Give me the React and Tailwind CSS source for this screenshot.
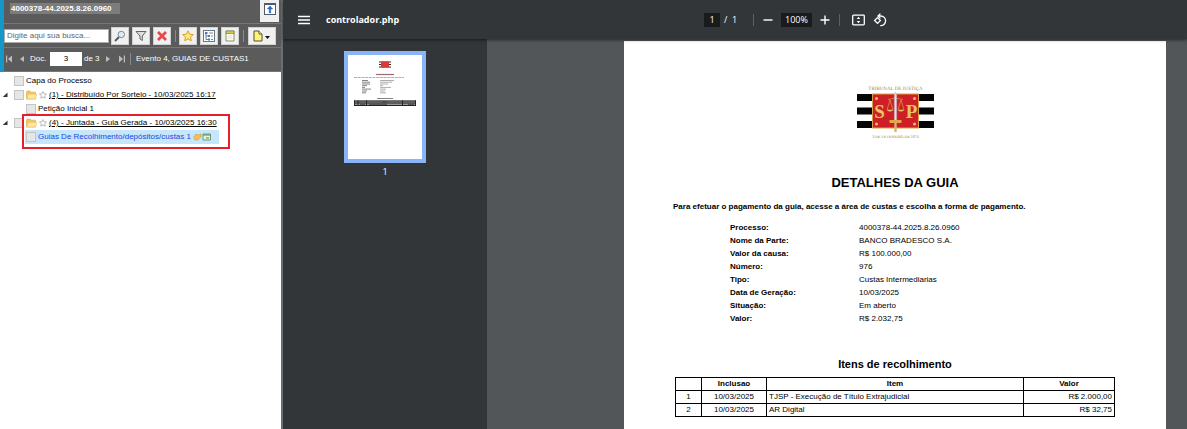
import React from "react";

const details = [
  ["Processo:", "4000378-44.2025.8.26.0960"],
  ["Nome da Parte:", "BANCO BRADESCO S.A."],
  ["Valor da causa:", "R$ 100.000,00"],
  ["Número:", "976"],
  ["Tipo:", "Custas Intermediarias"],
  ["Data de Geração:", "10/03/2025"],
  ["Situação:", "Em aberto"],
  ["Valor:", "R$ 2.032,75"],
];

const items = [
  ["1", "10/03/2025", "TJSP - Execução de Título Extrajudicial", "R$ 2.000,00"],
  ["2", "10/03/2025", "AR Digital", "R$ 32,75"],
];

function ToolButton({ label, wide, children }) {
  return (
    <button
      type="button"
      aria-label={label}
      className={
        (wide ? "w-7" : "w-[18px]") +
        " flex h-[18px] shrink-0 items-center justify-center border border-[#d0d0d0] bg-[#f0f0f0]"
      }
    >
      {children}
    </button>
  );
}

function Divider() {
  return <span className="h-3 w-px shrink-0 bg-[#8a8a8a]" />;
}

function Star({ className, fill, stroke }) {
  return (
    <svg viewBox="0 0 12 12" className={className} aria-hidden="true">
      <path d="M6 .8 7.6 4.2l3.7.4-2.8 2.5.8 3.7L6 8.9l-3.3 1.9.8-3.7L.7 4.6l3.7-.4Z" fill={fill} stroke={stroke} strokeWidth="1" strokeLinejoin="round" />
    </svg>
  );
}

function Folder() {
  return (
    <svg viewBox="0 0 11 10" className="h-[10px] w-[11px] shrink-0" aria-hidden="true">
      <path d="M.5 9V1.8L1.2 1h3l1 1.200h4.300V9Z" fill="#f3c65c" stroke="#dda844" strokeWidth=".6" />
      <path d="M.8 9 2 4.200h8.700L9.500 9Z" fill="#ffe7a0" stroke="#e9bd60" strokeWidth=".6" />
    </svg>
  );
}

function Check({ label }) {
  return (
    <input
      type="checkbox"
      aria-label={label}
      className="size-[10px] shrink-0 appearance-none border border-[#c4c4c4] bg-[#e6e6e6]"
    />
  );
}

function Arrow() {
  return (
    <svg viewBox="0 0 6 6" className="mr-1.5 size-1.5 shrink-0" aria-hidden="true">
      <path d="M5.500 .5V5H.8Z" fill="#333" />
    </svg>
  );
}

function FolderRow({ text }) {
  return (
    <div className="flex h-3.5 items-center pl-0.5">
      <Arrow />
      <Check label={text} />
      <span className="w-0.5" />
      <Folder />
      <Star className="mx-0.5 size-2 shrink-0" fill="#fff" stroke="#999" />
      <a href="#evento" className="underline">{text}</a>
    </div>
  );
}

function ProcessPanel() {
  return (
    <aside className="flex w-[283px] shrink-0 flex-col border-r-2 border-[#6b6d6f] bg-white font-['Liberation_Sans',Arial,sans-serif] text-[8px] leading-[14px] text-black">
      <header className="border-b border-l-4 border-b-[#777] border-l-[#1597c9] bg-[#5b5b5b] text-white">
        <div className="flex h-6 items-start justify-between border-b border-[#777] pr-0.5 pl-1.5">
          <span className="mt-[3px] bg-[#7c7c7c] pr-2 pl-px leading-[11px] font-bold">4000378-44.2025.8.26.0960</span>
          <button type="button" aria-label="Recolher painel" className="flex h-[22px] w-[19px] items-start justify-center bg-[#f0f0f0] pt-[3px]">
            <svg viewBox="0 0 12 12" className="size-3" aria-hidden="true">
              <rect x=".5" y=".5" width="11" height="11" fill="#fff" stroke="#4d5a6a" />
              <path d="M1 1.500h10" stroke="#4d5a6a" />
              <path d="M6 3 3.200 6h2v4h1.600V6h2Z" fill="#2568c4" stroke="#2568c4" strokeWidth=".4" />
            </svg>
          </button>
        </div>
        <div className="flex h-6 items-center border-b border-[#777]">
          <input
            type="text"
            aria-label="Busca"
            placeholder="Digite aqui sua busca..."
            className="h-3.5 w-[105px] border border-[#aaa] bg-white px-0.5 text-black placeholder:text-[#666]"
          />
          <div className="flex items-center gap-[3px] pl-0.5">
            <ToolButton label="Buscar">
              <svg viewBox="0 0 12 12" className="size-3" aria-hidden="true">
                <path d="m5 7-4 4" stroke="#555" strokeWidth="1.800" />
                <circle cx="7.300" cy="4.500" r="3.200" fill="#dcecf7" stroke="#7d8790" />
              </svg>
            </ToolButton>
            <ToolButton label="Filtrar">
              <svg viewBox="0 0 12 12" className="size-3" aria-hidden="true">
                <path d="M1 1.500h10L7.300 6v4.500L5 9V6Z" fill="#ddd" stroke="#666" />
              </svg>
            </ToolButton>
            <ToolButton label="Limpar">
              <svg viewBox="0 0 12 12" className="size-3" aria-hidden="true">
                <path d="m2 2 8 8m0-8-8 8" stroke="#e8484c" strokeWidth="2.800" />
              </svg>
            </ToolButton>
          </div>
          <div className="flex items-center gap-[3px] pl-1">
            <Divider />
            <ToolButton label="Favoritos">
              <Star className="size-3" fill="#ffe680" stroke="#d9a520" />
            </ToolButton>
            <ToolButton label="Árvore">
              <svg viewBox="0 0 12 12" className="size-3" aria-hidden="true">
                <rect x=".5" y=".5" width="11" height="11" fill="#fff" stroke="#68788b" />
                <path d="M3 2v7.500h2M3 6h2M3 3h2" fill="none" stroke="#587daf" />
                <path d="M2 2h2v2H2zM5 5h2v2H5zM5 8.500h2v2H5z" fill="#5079aa" />
                <path d="M6 3h4M8 6h2M8 9.500h2" stroke="#888" />
              </svg>
            </ToolButton>
            <ToolButton label="Documentos">
              <svg viewBox="0 0 12 12" className="size-3" aria-hidden="true">
                <path d="M2 1h8v10H2Z" fill="#f8faee" stroke="#8b9560" />
                <path d="M2 1h8v2.500H2Z" fill="#d9c94c" stroke="#79864c" strokeWidth=".7" />
                <path d="M4 6h4M4 8h4" stroke="#dde0da" />
              </svg>
            </ToolButton>
            <span className="flex items-center gap-1 pl-px">
              <Divider />
              <ToolButton label="Novo documento" wide>
                <svg viewBox="0 0 18 12" className="h-3 w-[18px]" aria-hidden="true">
                  <path d="M1 1h5l3 3v7H1Z" fill="#fff47c" stroke="#55502a" />
                  <path d="M6 1v3h3" fill="#fff" stroke="#55502a" />
                  <path d="M12 6h5l-2.500 3Z" fill="#111" />
                </svg>
              </ToolButton>
            </span>
          </div>
        </div>
        <div className="flex h-[23px] items-center pb-0.5 pl-0.5">
          <svg viewBox="0 0 20 8" className="h-2 w-5" aria-hidden="true">
            <path d="M0 .5h1.200v7H0ZM6 .5v7L2 4ZM18 1v6L14 4Z" fill="#bdbdbd" />
          </svg>
          <label htmlFor="doc" className="w-6 pl-1">Doc.</label>
          <input id="doc" type="text" defaultValue="3" className="h-3.5 w-8 bg-white text-center text-black" />
          <span className="w-6 pl-0.5">de 3</span>
          <svg viewBox="0 0 20 8" className="h-2 w-5" aria-hidden="true">
            <path d="M0 1v6l4-3ZM13 .5v7l4-3.500ZM17.800 .5h1.200v7h-1.200Z" fill="#bdbdbd" />
          </svg>
          <span className="flex items-center gap-[5px] pl-1">
            <Divider />
            <span>Evento 4, GUIAS DE CUSTAS1</span>
          </span>
        </div>
      </header>
      <nav className="pt-0.5" aria-label="Árvore do processo">
        <div className="flex h-3.5 items-center gap-0.5 pl-3.5">
          <Check label="Capa do Processo" />
          <a href="#capa">Capa do Processo</a>
        </div>
        <FolderRow text="(1) - Distribuído Por Sorteio - 10/03/2025 16:17" />
        <div className="flex h-3.5 items-center gap-0.5 pl-[26px]">
          <Check label="Petição Inicial 1" />
          <a href="#peticao">Petição Inicial 1</a>
        </div>
        <div className="relative">
          <FolderRow text="(4) - Juntada - Guia Gerada - 10/03/2025 16:30" />
          <div className="ml-[25px] flex h-3.5 w-[194px] items-center gap-0.5 bg-[#c5e6fb] pl-px">
            <Check label="Guias de recolhimento" />
            <a href="#guias" className="whitespace-nowrap text-[#2148dc]">Guias De Recolhimento/depósitos/custas 1</a>
            <svg viewBox="0 0 18 8" className="h-2 w-[18px] shrink-0" aria-hidden="true">
              <path d="M.5 4 3 1l2 1 3-1v3L5 7H2Z" fill="#efc15c" stroke="#d79c38" strokeWidth=".6" />
              <path d="M10 1h7.500v6H10Z" fill="#e7f4dd" stroke="#6e9c70" />
              <path d="M10 2h7.500M13 5h3" stroke="#4e865b" />
            </svg>
          </div>
          <div className="pointer-events-none absolute -top-0.5 left-[22px] h-[35px] w-52 border-2 border-[#e3202b]" />
        </div>
      </nav>
    </aside>
  );
}

function ViewerToolbar() {
  return (
    <header className="z-10 flex h-[39px] shrink-0 items-center bg-[#323639] pl-[15px] text-[9px] text-white shadow-[0_1px_3px_#0008]">
      <button type="button" aria-label="Menu" className="w-3">
        <svg viewBox="0 0 12 10" className="h-[10px] w-3" aria-hidden="true">
          <path d="M0 1.500h12M0 5h12M0 8.500h12" stroke="#fff" strokeWidth="1.500" />
        </svg>
      </button>
      <h1 className="w-[394px] pl-4 font-bold">controlador.php</h1>
      <div className="flex items-center">
        <input aria-label="Página" type="text" defaultValue="1" className="h-3.5 w-4 bg-[#191b1c] text-center" />
        <span className="w-[33px] pl-1">/&nbsp; 1</span>
        <span className="h-3 w-px bg-[#5d6164]" />
        <button type="button" aria-label="Reduzir" className="ml-[9px]">
          <svg viewBox="0 0 10 10" className="size-[10px]"><path d="M.5 5h9" stroke="#fff" strokeWidth="1.400" /></svg>
        </button>
        <input aria-label="Zoom" type="text" defaultValue="100%" className="ml-2 h-3.5 w-[31px] bg-[#191b1c] text-center" />
        <button type="button" aria-label="Ampliar" className="ml-2">
          <svg viewBox="0 0 10 10" className="size-[10px]"><path d="M.5 5h9M5 .5v9" stroke="#fff" strokeWidth="1.400" /></svg>
        </button>
        <span className="ml-[9px] h-3 w-px bg-[#5d6164]" />
        <button type="button" aria-label="Ajustar à página" className="ml-3">
          <svg viewBox="0 0 13 12" className="h-3 w-[13px]">
            <rect x=".7" y="1.200" width="11.600" height="9.600" rx=".8" fill="none" stroke="#fff" strokeWidth="1.300" />
            <path d="M6.500 2.700 8.300 5H4.700ZM6.500 9.300 4.700 7h3.600Z" fill="#fff" />
          </svg>
        </button>
        <button type="button" aria-label="Girar" className="ml-2">
          <svg viewBox="0 0 14 14" className="size-3.5" fill="none" stroke="#fff" strokeWidth="1.300">
            <path d="m4.500 4.600 2.900 2.900-2.900 2.900-2.900-2.900Z" />
            <path d="M5.200 3h2.600a4.800 4.800 0 1 1 0 9.600h-.6M7.400.6 5 3l2.400 2.400" />
          </svg>
        </button>
      </div>
    </header>
  );
}

function Thumbnail() {
  return (
    <svg viewBox="0 0 74 104" className="h-[104px] w-[74px] bg-white" aria-hidden="true">
      <path d="M31 7h12M31 9.500h12M31 12h12" stroke="#332222" strokeWidth="1" />
      <rect x="33" y="6.500" width="8" height="6" fill="#d83a34" />
      <path d="M28 19.500h18" stroke="#a26a70" strokeWidth="1.200" />
      <path d="M6 22.500h50" stroke="#999" strokeWidth=".8" strokeDasharray="3 .7" />
      <path d="M14 25.500h6M14 27.200h8M14 29h8M14 30.700h5M14 32.400h3M14 34.100h9M14 36h5M14 37.800h4" stroke="#777" strokeWidth=".9" />
      <path d="M32 25.500h14M32 27.200h12M32 29h8M32 30.700h3M32 32.400h11M32 34.100h6M32 36h5M32 37.800h6" stroke="#999" strokeWidth=".8" />
      <path d="M29 43.500h16" stroke="#777" strokeWidth=".9" />
      <rect x="6" y="45.500" width="62" height="5.500" fill="#999" />
      <path d="M6 46h62M6 48h62M6 50.500h62M6.500 45.500v5.500M10 45.500v5.500M18.500 45.500v5.500M54.500 45.500v5.500M67.500 45.500v5.500" stroke="#222" />
      <path d="M12 49.300h5M21 49.300h18M60 49.300h6M34 47h5" stroke="#333" strokeWidth=".8" />
    </svg>
  );
}

function Crest() {
  return (
    <svg viewBox="0 0 78 56" className="h-14 w-[78px]" aria-hidden="true">
      <text x="39.500" y="5" textAnchor="middle" fontSize="5" fontFamily="Liberation Serif, serif" fill="#9a8244" textRendering="geometricPrecision">TRIBUNAL DE JUSTIÇA</text>
      <path d="M1 9h77v7H1ZM1 22.500h77v7H1ZM1 36h77v7H1Z" fill="#050505" />
      <rect x="16.500" y="9" width="46" height="34" fill="#cf1f26" stroke="#d9a046" />
      <g fill="#eac267">
        <circle cx="20.500" cy="13.500" r="1.500" />
        <circle cx="58.500" cy="13.500" r="1.500" />
        <circle cx="20.500" cy="39" r="1.500" />
        <circle cx="58.500" cy="39" r="1.500" />
        <text x="23.500" y="32.500" textAnchor="middle" fontSize="19" fontWeight="bold" fontFamily="Liberation Serif, serif">S</text>
        <text x="55.500" y="32.500" textAnchor="middle" fontSize="19" fontWeight="bold" fontFamily="Liberation Serif, serif">P</text>
      </g>
      <path d="M32 14.500q7.500-3 15 0M34 15l-3 10h6ZM45 15l-3 10h6Z" fill="none" stroke="#df9f45" strokeWidth=".7" />
      <path d="M31 25h6q-3 3-6 0M42 25h6q-3 3-6 0" fill="#eac267" />
      <path d="M38.300 36V10l1.200-3 1.200 3v26Z" fill="#e6e1e8" stroke="#a5a0b5" strokeWidth=".4" />
      <path d="M33.500 35h12v3h-12Z" fill="#e1a744" />
      <path d="M38.300 38h2.400v9h-2.400Z" fill="#d6b471" />
      <text x="39.500" y="52.500" textAnchor="middle" fontSize="4" fontFamily="Liberation Serif, serif" fill="#9a8244" textRendering="geometricPrecision">3 DE FEVEREIRO DE 1874</text>
    </svg>
  );
}

function PdfPage() {
  return (
    <article className="flex w-[542px] flex-col bg-white px-[49px] pt-11 font-['Liberation_Sans',Arial,sans-serif] text-[8px] leading-[13px] text-black">
      <div className="flex justify-center"><Crest /></div>
      <h2 className="mt-[34px] text-center text-[13px] leading-4 font-bold">DETALHES DA GUIA</h2>
      <p className="mt-[9px] font-bold whitespace-nowrap">Para efetuar o pagamento da guia, acesse a área de custas e escolha a forma de pagamento.</p>
      <dl className="mt-2 ml-[57px] grid grid-cols-[129px_1fr]">
        {details.map(([k, v]) => (
          <React.Fragment key={k}>
            <dt className="font-bold">{k}</dt>
            <dd>{v}</dd>
          </React.Fragment>
        ))}
      </dl>
      <h3 className="mt-8 text-center text-[11px] leading-[14px] font-bold">Itens de recolhimento</h3>
      <table className="mt-1.5 ml-0.5 w-[440px] table-fixed border-collapse leading-3">
        <thead>
          <tr>
            <th className="w-[26px] border border-black" />
            <th className="w-[65px] border border-black">Inclusao</th>
            <th className="border border-black">Item</th>
            <th className="w-[91px] border border-black">Valor</th>
          </tr>
        </thead>
        <tbody>
          {items.map(([n, date, item, value]) => (
            <tr key={n}>
              <td className="border border-black text-center">{n}</td>
              <td className="border border-black text-center">{date}</td>
              <td className="border border-black pl-0.5">{item}</td>
              <td className="border border-black pr-0.5 text-right">{value}</td>
            </tr>
          ))}
        </tbody>
      </table>
    </article>
  );
}

export default function App() {
  return (
    <main className="flex h-screen overflow-hidden">
      <ProcessPanel />
      <section className="flex min-w-0 flex-1 flex-col bg-[#525659] font-['Open_Sans','Noto_Sans',sans-serif]">
        <ViewerToolbar />
        <div className="flex min-h-0 flex-1">
          <aside className="flex w-[204px] shrink-0 flex-col items-center bg-[#323639] pt-3">
            <a href="#pagina-1" aria-label="Página 1" className="border-4 border-[#8ab4f8]"><Thumbnail /></a>
            <span className="mt-0.5 text-[9px] leading-[14px] text-white">1</span>
          </aside>
          <div className="flex min-w-0 flex-1 justify-end overflow-hidden pt-0.5 pr-[21px]">
            <PdfPage />
          </div>
        </div>
      </section>
    </main>
  );
}
